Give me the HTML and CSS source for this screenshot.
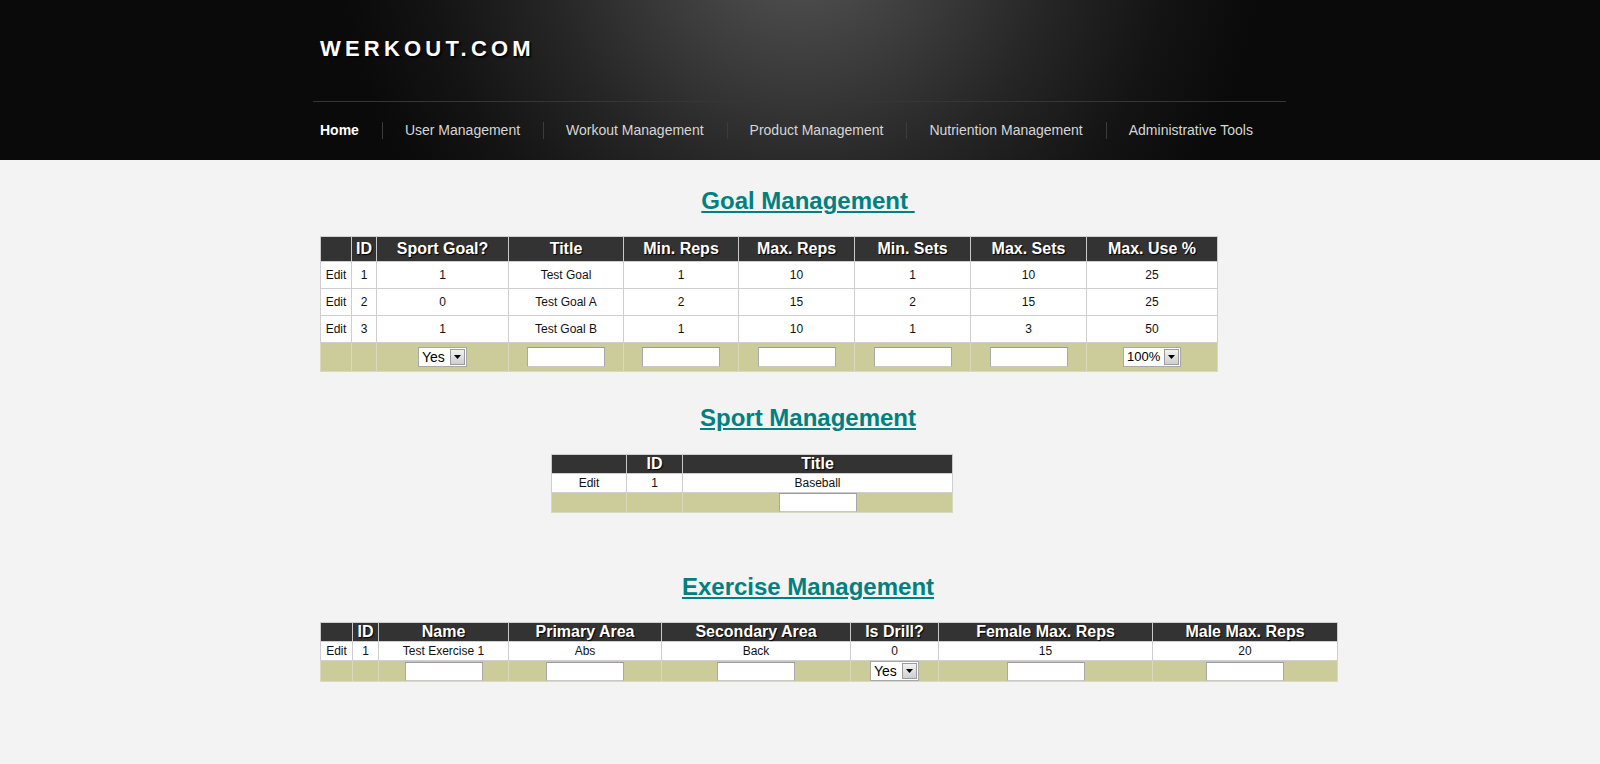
FILE: index.html
```html
<!DOCTYPE html>
<html>
<head>
<meta charset="utf-8">
<title>Werkout.com</title>
<link rel="stylesheet" href="styles.css">
</head>
<body>
<header class="site-header">
  <div class="header-inner">
    <div class="logo">WERKOUT.COM</div>
    <nav class="nav">
      <ul>
        <li class="active">Home</li>
        <li>User Management</li>
        <li>Workout Management</li>
        <li>Product Management</li>
        <li>Nutriention Management</li>
        <li>Administrative Tools</li>
      </ul>
    </nav>
  </div>
</header>

<main class="content">
  <h2 class="section-title first"><a href="#">Goal Management&nbsp;</a></h2>
  <table class="grid goal">
    <colgroup>
      <col class="w31"><col class="w25"><col class="w132"><col class="w115"><col class="w115"><col class="w116"><col class="w116"><col class="w116"><col class="w131">
    </colgroup>
    <thead>
      <tr><th></th><th>ID</th><th>Sport Goal?</th><th>Title</th><th>Min. Reps</th><th>Max. Reps</th><th>Min. Sets</th><th>Max. Sets</th><th>Max. Use %</th></tr>
    </thead>
    <tbody>
      <tr><td>Edit</td><td>1</td><td>1</td><td>Test Goal</td><td>1</td><td>10</td><td>1</td><td>10</td><td>25</td></tr>
      <tr><td>Edit</td><td>2</td><td>0</td><td>Test Goal A</td><td>2</td><td>15</td><td>2</td><td>15</td><td>25</td></tr>
      <tr><td>Edit</td><td>3</td><td>1</td><td>Test Goal B</td><td>1</td><td>10</td><td>1</td><td>3</td><td>50</td></tr>
      <tr class="insert">
        <td></td><td></td>
        <td><span class="select w49"><span class="sel-val">Yes</span><span class="sel-btn"><svg width="7" height="4" viewBox="0 0 7 4"><path d="M0 0h7L3.5 4z" fill="#000"/></svg></span></span></td>
        <td><span class="textbox"></span></td>
        <td><span class="textbox"></span></td>
        <td><span class="textbox"></span></td>
        <td><span class="textbox"></span></td>
        <td><span class="textbox"></span></td>
        <td><span class="select w58"><span class="sel-val">100%</span><span class="sel-btn"><svg width="7" height="4" viewBox="0 0 7 4"><path d="M0 0h7L3.5 4z" fill="#000"/></svg></span></span></td>
      </tr>
    </tbody>
  </table>

  <h2 class="section-title sport-title"><a href="#">Sport Management</a></h2>
  <table class="grid compact sport">
    <colgroup><col class="w75"><col class="w56"><col class="w270"></colgroup>
    <thead><tr><th></th><th>ID</th><th>Title</th></tr></thead>
    <tbody>
      <tr><td>Edit</td><td>1</td><td>Baseball</td></tr>
      <tr class="insert"><td></td><td></td><td><span class="textbox"></span></td></tr>
    </tbody>
  </table>

  <h2 class="section-title exercise-title"><a href="#">Exercise Management</a></h2>
  <table class="grid compact exercise">
    <colgroup>
      <col class="w32"><col class="w26"><col class="w130"><col class="w153"><col class="w189"><col class="w88"><col class="w214"><col class="w185">
    </colgroup>
    <thead>
      <tr><th></th><th>ID</th><th>Name</th><th>Primary Area</th><th>Secondary Area</th><th>Is Drill?</th><th>Female Max. Reps</th><th>Male Max. Reps</th></tr>
    </thead>
    <tbody>
      <tr><td>Edit</td><td>1</td><td>Test Exercise 1</td><td>Abs</td><td>Back</td><td>0</td><td>15</td><td>20</td></tr>
      <tr class="insert">
        <td></td><td></td>
        <td><span class="textbox"></span></td>
        <td><span class="textbox"></span></td>
        <td><span class="textbox"></span></td>
        <td><span class="select w49"><span class="sel-val">Yes</span><span class="sel-btn"><svg width="7" height="4" viewBox="0 0 7 4"><path d="M0 0h7L3.5 4z" fill="#000"/></svg></span></span></td>
        <td><span class="textbox"></span></td>
        <td><span class="textbox"></span></td>
      </tr>
    </tbody>
  </table>
</main>
</body>
</html>
```
FILE: styles.css
```css
html, body {
  margin: 0;
  padding: 0;
}
body {
  background: #f3f3f3;
  font-family: "Liberation Sans", Arial, sans-serif;
  color: #111;
}

/* ---------- header ---------- */
.site-header {
  height: 160px;
  background:
    radial-gradient(ellipse 460px 440px at 800px -60px, #555 0%, #3c3c3c 30%, #262626 55%, #141414 80%, #0a0a0a 100%),
    #0a0a0a;
  overflow: hidden;
}
.header-inner {
  margin-left: 313px;
  width: 973px;
}
.logo {
  padding: 36px 0 0 7px;
  height: 26px;
  line-height: 26px;
  font-size: 22px;
  font-weight: bold;
  letter-spacing: 4.2px;
  color: #fff;
  text-shadow: 1px 1px 1px #000, 2px 2px 2px rgba(0,0,0,0.6);
}
.nav {
  margin-top: 39px;
  border-top: 1px solid #363636;
  padding: 20px 0 0 7px;
}
.nav ul {
  list-style: none;
  margin: 0;
  padding: 0;
  display: flex;
}
.nav li {
  font-size: 14px;
  line-height: 17px;
  height: 17px;
  color: #d6d6d6;
  padding: 0 23px 0 22px;
  border-left: 1px solid #3c3c3c;
}
.nav li.active {
  padding-left: 0;
  border-left: none;
  color: #fff;
  font-weight: bold;
}

/* ---------- content ---------- */
.content {
  margin-left: 320px;
  width: 976px;
  padding-top: 27px;
}
.section-title {
  margin: 0;
  font-size: 24px;
  line-height: 28px;
  font-weight: bold;
  text-align: center;
}
.section-title a {
  color: #008080;
  text-decoration: underline;
}
.sport-title { margin-top: 32px; }
.exercise-title { margin-top: 60px; }

.grid {
  border-collapse: collapse;
  table-layout: fixed;
  margin-top: 21px;
  text-align: center;
  background: #fff;
}
.grid th, .grid td {
  border: 1px solid #cfcfcf;
  padding: 0;
  vertical-align: middle;
}
.grid th {
  background: #333;
  color: #fff;
  font-size: 16px;
  font-weight: bold;
  line-height: 18px;
  height: 24px;
  text-shadow: 1px 1px 1px #000;
  border-color: #cfcfcf #c8c8c8;
}
.grid td {
  font-size: 12px;
  height: 26px;
}
.grid tr.insert td {
  background: #cccc9a;
  height: 28px;
  border-color: #d9d9c0;
}

.goal { width: 897px; }
.sport { width: 401px; margin-left: 231px; margin-top: 22px; }
.exercise { width: 1017px; margin-top: 21px; }

.compact th { height: 18px; line-height: 18px; }
.compact td { height: 18px; }
.compact tr.insert td { height: 19px; }

col.w25 { width: 25px; }
col.w26 { width: 26px; }
col.w31 { width: 31px; }
col.w32 { width: 32px; }
col.w56 { width: 56px; }
col.w75 { width: 75px; }
col.w88 { width: 88px; }
col.w115 { width: 115px; }
col.w116 { width: 116px; }
col.w130 { width: 130px; }
col.w131 { width: 131px; }
col.w132 { width: 132px; }
col.w153 { width: 153px; }
col.w185 { width: 185px; }
col.w189 { width: 189px; }
col.w214 { width: 214px; }
col.w270 { width: 270px; }

/* ---------- form controls ---------- */
.textbox {
  display: inline-block;
  vertical-align: middle;
  width: 76px;
  height: 18px;
  background: #fff;
  border: 1px solid #a8a8a8;
  border-top-color: #9a9a9a;
  border-bottom-color: #c8c8c8;
}
.compact .textbox { height: 17px; }

.select {
  display: inline-flex;
  vertical-align: middle;
  align-items: center;
  height: 18px;
  background: #fff;
  border: 1px solid #a8a8a8;
  box-sizing: content-box;
  font-size: 14px;
  color: #000;
}
.select.w49 { width: 47px; }
.select.w58 { width: 56px; font-size: 13px; }
.sel-val {
  flex: 1;
  text-align: left;
  padding-left: 3px;
  line-height: 18px;
}
.sel-btn {
  width: 15px;
  height: 16px;
  margin-right: 1px;
  box-sizing: border-box;
  border: 1px solid #9c9c9c;
  background: linear-gradient(#f2f2f2, #cfcfcf);
  display: flex;
  align-items: center;
  justify-content: center;
}
.sel-btn svg { display: block; }
```
